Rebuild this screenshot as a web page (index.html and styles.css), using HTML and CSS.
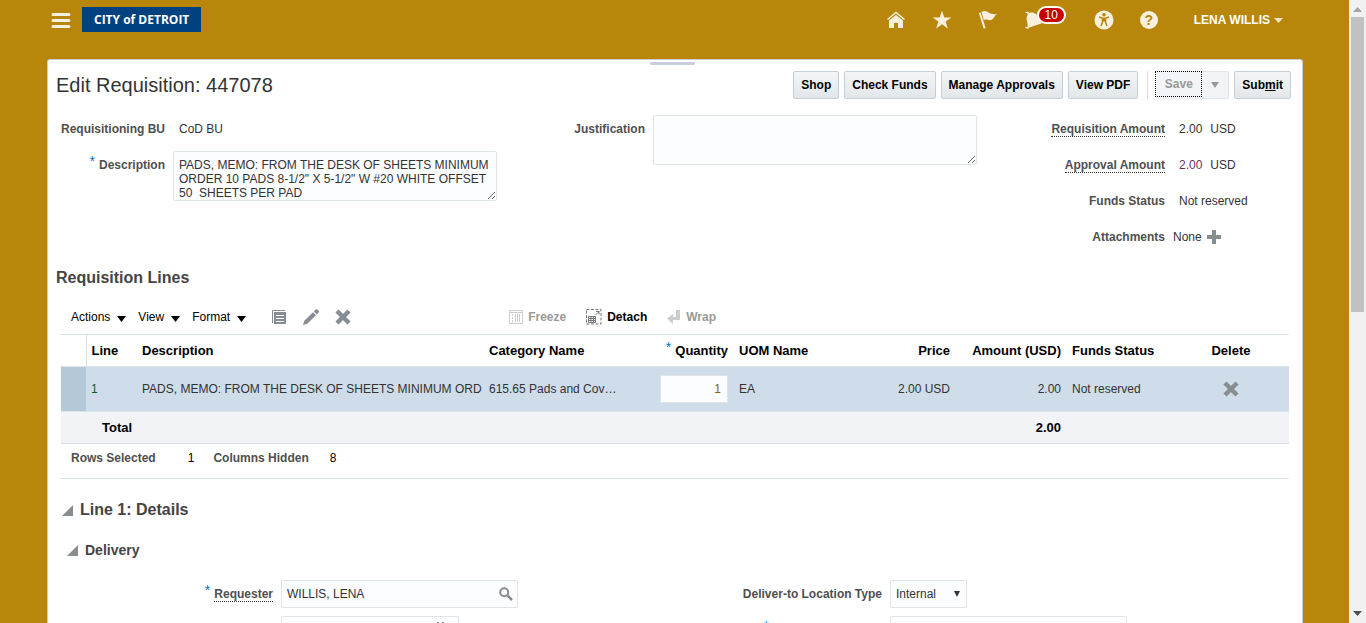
FILE: index.html
```html
<!DOCTYPE html>
<html lang="en">
<head>
<meta charset="utf-8">
<title>Edit Requisition: 447078</title>
<link rel="stylesheet" href="styles.css">
</head>
<body>
<div class="app">
  <header class="topbar">
    <button class="icon-btn menu" aria-label="Navigator"><svg width="20" height="16" viewBox="0 0 20 16" stroke="#f7f0df" stroke-width="3" stroke-linecap="round"><path d="M2 2.5h16M2 8.500h16M2 14.500h16"/></svg></button>
    <a class="brand" href="#">CITY of DETROIT</a>
    <nav class="tools">
      <button class="icon-btn" aria-label="Home"><svg width="20" height="20" viewBox="0 0 20 20"><path d="M1.500 9.500 10 2.500l8.500 7" fill="none" stroke="#f7f0df" stroke-width="1.600"/><path d="M3 10.600 10 4.900l7 5.700V18h-5v-5H8v5H3z" fill="#f7f0df"/></svg></button>
      <button class="icon-btn" aria-label="Favorites"><svg width="20" height="20" viewBox="0 0 20 20"><path d="m10 .8 2.300 6.600h7l-5.600 4.100 2.100 6.900L10 14.300l-5.800 4.100 2.100-6.900L.7 7.400h7z" fill="#f7f0df"/></svg></button>
      <button class="icon-btn" aria-label="Watchlist"><svg width="20" height="20" viewBox="0 0 20 20"><path d="m.8 3 1.800-.5 5 15.500-1.900.5z" fill="#f7f0df"/><path d="M3.500 2C7 .3 8.500 1.300 11 2.800c2.500 1.400 5 1.700 8.200 1.200-2.700 1.500-3.200 4.300-5.400 5.700-3 1.500-5.300-1.500-8 .3z" fill="#f7f0df"/></svg></button>
      <button class="icon-btn bell" aria-label="Notifications, 10 new"><svg width="20" height="20" viewBox="0 0 20 20"><path d="M1 3.200C2.300 1 4.300 1.600 5.300 3c4-1.500 8 1 9.200 5 .6 2.200 1 3.500 3.500 5.300L3 18.200c1.200-3 .6-4.500.1-6.500C2.200 8.800 2.500 6 4 4.300 3.200 3 2.200 2.800 1 3.200z" fill="#f7f0df"/><path d="M1.300 16.500c0 2 1.500 2.700 4 1.800z" fill="#f7f0df"/></svg><span class="badge">10</span></button>
      <button class="icon-btn" aria-label="Accessibility"><svg width="20" height="20" viewBox="0 0 20 20"><circle cx="10" cy="10" r="9.500" fill="#f7f0df"/><circle cx="10" cy="4.800" r="1.800" fill="#b8860b"/><path d="m5 7 3.500 1.200h3L15 7M10 8v3.500M8.500 8.500v3.500L7 16m4.500-7.500v3.500L13 16" fill="none" stroke="#b8860b" stroke-width="1.500"/></svg></button>
      <button class="icon-btn help" aria-label="Help">?</button>
      <button class="user">LENA WILLIS<svg width="9" height="5" viewBox="0 0 9 5"><path d="M0 0h9L4.500 5z" fill="#f0e4c6"/></svg></button>
    </nav>
  </header>

  <main class="panel">
    <span class="grip"></span>
    <div class="titlebar">
      <h1>Edit Requisition: 447078</h1>
      <div class="actions">
        <button class="btn">Shop</button>
        <button class="btn">Check Funds</button>
        <button class="btn">Manage Approvals</button>
        <button class="btn">View PDF</button>
        <span class="divider"></span>
        <div class="split"><button class="save">Save</button><button class="save-more" aria-label="More save options"><svg width="8" height="6" viewBox="0 0 8 6"><path d="M0 0h8L4 6z" fill="#999"/></svg></button></div>
        <button class="btn">Sub<u>m</u>it</button>
      </div>
    </div>

    <form class="summary">
      <div class="col">
        <div class="field"><span class="label">Requisitioning BU</span><span class="value">CoD BU</span></div>
        <div class="field area"><label class="label" for="desc"><i class="req">*</i>Description</label><textarea id="desc">PADS, MEMO: FROM THE DESK OF SHEETS MINIMUM
ORDER 10 PADS 8-1/2" X 5-1/2" W #20 WHITE OFFSET
50  SHEETS PER PAD</textarea></div>
      </div>
      <div class="col">
        <div class="field area"><label class="label" for="just">Justification</label><textarea id="just"></textarea></div>
      </div>
      <div class="col amounts">
        <div class="field"><span class="label"><span class="hint">Requisition Amount</span></span><span class="value money"><span>2.00</span><span>USD</span></span></div>
        <div class="field"><span class="label"><span class="hint">Approval Amount</span></span><span class="value money"><a class="visited" href="#">2.00</a><span>USD</span></span></div>
        <div class="field"><span class="label">Funds Status</span><span class="value">Not reserved</span></div>
        <div class="field"><span class="label">Attachments</span><span class="attach">None<button class="icon-btn" type="button" aria-label="Add attachment"><svg width="14" height="14" viewBox="0 0 14 14"><path d="M7 0v14M0 7h14" stroke="#888d91" stroke-width="4"/></svg></button></span></div>
      </div>
    </form>

    <h2>Requisition Lines</h2>
    <section class="lines">
      <div class="toolbar">
        <button class="menu-btn">Actions<svg width="9" height="6" viewBox="0 0 9 6"><path d="M0 0h9L4.500 6z"/></svg></button>
        <button class="menu-btn">View<svg width="9" height="6" viewBox="0 0 9 6"><path d="M0 0h9L4.500 6z"/></svg></button>
        <button class="menu-btn">Format<svg width="9" height="6" viewBox="0 0 9 6"><path d="M0 0h9L4.500 6z"/></svg></button>
        <div class="edit-tools">
          <button class="icon-btn" aria-label="Duplicate"><svg width="16" height="16" viewBox="0 0 16 16"><path d="M1.500 14V1.500H14" fill="none" stroke="#888d91"/><path d="M3 3h12v12H3z" fill="#888d91"/><path d="M5 6.500h8M5 9.500h8M5 12.500h8" stroke="#fff"/></svg></button>
          <button class="icon-btn" aria-label="Edit"><svg width="16" height="16" viewBox="0 0 16 16" fill="#888d91"><path d="m0 16 1.300-4.200L10 3.200l3 3-8.700 8.600z"/><path d="m10.800 2.400 1.800-1.800c.6-.6 1.200-.6 1.800 0l1.200 1.200c.5.600.5 1.200 0 1.700l-1.800 1.900z"/></svg></button>
          <button class="icon-btn" aria-label="Delete"><svg width="16" height="16" viewBox="0 0 16 16"><path d="m2 2 12 12M14 2 2 14" stroke="#888d91" stroke-width="4.500"/></svg></button>
        </div>
        <div class="view-tools">
          <button class="tool off" disabled><svg width="14" height="14" viewBox="0 0 14 14" fill="none" stroke="#cacccd"><path d="M.5.500h13v13H.5zM0 2.500h14M8.500 4v8M10.500 4v8M6.500 4v8"/><path d="M3.500 4v8" stroke-dasharray="2 1"/></svg>Freeze</button>
          <button class="tool"><svg width="16" height="16" viewBox="0 0 16 16" fill="none" stroke="#73797e"><path d="M.5.500h14.500v14.500H.5z" stroke-dasharray="3 1.500"/><path d="M2.500 7.500h7v6h-7zM2.500 9.500h7M2.500 11.500h7M5 7.500v6M7.500 7.500v6M9.500 6 13 2.500M10 2.500h3V5.500"/></svg>Detach</button>
          <button class="tool off" disabled><svg width="14" height="14" viewBox="0 0 14 14"><path d="M9 0h4v10H6v4L0 8.500 6 4v3h3z" fill="#cacccd"/></svg>Wrap</button>
        </div>
      </div>

      <table>
        <colgroup><col class="c-sel"><col class="c-line"><col><col class="c-cat"><col class="c-std"><col class="c-std"><col class="c-std"><col class="c-std"><col class="c-std"><col class="c-std"></colgroup>
        <thead><tr><th class="sel"></th><th>Line</th><th>Description</th><th>Category Name</th><th class="num"><i class="req">*</i>Quantity</th><th>UOM Name</th><th class="num">Price</th><th class="num">Amount (USD)</th><th>Funds Status</th><th class="mid">Delete</th></tr></thead>
        <tbody><tr><td class="sel"></td><td class="lineno">1</td><td>PADS, MEMO: FROM THE DESK OF SHEETS MINIMUM ORD</td><td>615.65 Pads and Cov…</td><td class="num"><input class="qty-input" value="1" aria-label="Quantity"></td><td>EA</td><td class="num">2.00 USD</td><td class="num">2.00</td><td>Not reserved</td><td class="mid"><button class="icon-btn" aria-label="Delete line 1"><svg width="16" height="16" viewBox="0 0 16 16"><path d="m2 2 12 12M14 2 2 14" stroke="#888d91" stroke-width="4.500"/></svg></button></td></tr></tbody>
        <tfoot><tr><td class="total" colspan="7">Total</td><td class="num">2.00</td><td colspan="2"></td></tr></tfoot>
      </table>
      <div class="status"><span class="label">Rows Selected</span><span class="count first">1</span><span class="label">Columns Hidden</span><span class="count">8</span></div>
    </section>

    <section class="details">
      <h2 class="disclose"><svg width="11" height="11" viewBox="0 0 11 11"><path d="M11 0v11H0z" fill="#888d91"/></svg>Line 1: Details</h2>
      <h3 class="disclose"><svg width="11" height="11" viewBox="0 0 11 11"><path d="M11 0v11H0z" fill="#888d91"/></svg>Delivery</h3>
      <form class="delivery">
        <div class="field"><label class="label" for="requester"><i class="req">*</i><span class="hint">Requester</span></label><span class="lookup wide"><input id="requester" value="WILLIS, LENA"><button class="icon-btn" type="button" aria-label="Search requester"><svg width="14" height="14" viewBox="0 0 14 14" fill="none" stroke="#888d91"><circle cx="5.200" cy="5.200" r="4" stroke-width="2"/><path d="m8.500 8.500 4.500 4.500" stroke-width="2.500"/></svg></button></span></div>
        <div class="field"><label class="label" for="loctype">Deliver-to Location Type</label><span class="select"><select id="loctype"><option>Internal</option></select><svg width="6" height="6" viewBox="0 0 6 6"><path d="M0 0h6L3 6z" fill="#333"/></svg></span></div>
        <div class="field"><span class="label"></span><span class="lookup date"><input aria-label="Date"><button class="icon-btn" type="button" aria-label="Pick date"><svg width="14" height="16" viewBox="0 0 14 16" stroke="#888d91" fill="none"><path d="M4 0v4M9 0v4" stroke-width="2"/><path d="M.5 4.500h13v11H.5z"/></svg></button></span></div>
        <div class="field"><span class="label open"><i class="req">*</i></span><span class="lookup wide"><input aria-label="Location"></span></div>
      </form>
    </section>
  </main>
</div>
<div class="scrollbar"><svg width="9" height="5" viewBox="0 0 9 5"><path d="M0 5h9L4.500 0z" fill="#a3a3a3"/></svg><div class="track"><div class="thumb"></div></div><svg width="9" height="5" viewBox="0 0 9 5"><path d="M0 0h9L4.500 5z" fill="#505050"/></svg></div>
</body>
</html>
```
FILE: styles.css
```css
* { box-sizing: border-box; }

body {
  margin: 0;
  height: 100vh;
  overflow: hidden;
  display: flex;
  background: #b8860b;
  color: #333;
  font: 12px/14px "Liberation Sans", Arial, sans-serif;
}

button, input, select, textarea { font: inherit; color: inherit; margin: 0; }
button { border: 0; padding: 0; background: none; cursor: pointer; white-space: nowrap; }
svg { display: block; flex: none; }

.app { flex: 1; min-width: 0; display: flex; flex-direction: column; }

/* Top bar */
.topbar { flex: none; height: 59px; padding: 7px 66px 0 51px; display: flex; align-items: flex-start; }
.icon-btn { display: flex; align-items: center; justify-content: center; }
.menu { height: 26px; margin-right: 11px; }
.brand {
  padding: 0 12px;
  background: #00417f;
  color: #fff;
  font: bold 12px/25px "Open Sans", sans-serif;
  text-decoration: none;
}
.tools { margin-left: auto; display: flex; align-items: center; gap: 26px; height: 26px; }
.bell { position: relative; width: 44px; justify-content: flex-start; }
.badge {
  position: absolute;
  left: 13px;
  top: -4px;
  width: 29px;
  border: 2px solid #fff;
  border-radius: 9px;
  background: #c80000;
  color: #fff;
  line-height: 14px;
}
.help {
  width: 18px;
  height: 18px;
  border-radius: 9px;
  background: #f7f0df;
  color: #b8860b;
  font-size: 14px;
  font-weight: bold;
}
.user { display: flex; align-items: center; gap: 4px; margin-left: 10px; color: #fff; font-weight: bold; }

/* Page panel */
.panel {
  position: relative;
  flex: 1;
  min-height: 0;
  overflow: hidden;
  margin: 0 46px 0 47px;
  padding: 0 8px;
  border: 1px solid #c9ccd0;
  border-bottom: 0;
  border-radius: 3px 3px 0 0;
  background: #fff;
}
.grip { position: absolute; top: 2px; left: 48%; width: 45px; height: 3px; border-radius: 2px; background: #c8cddb; }

.titlebar { display: flex; align-items: center; height: 51px; padding: 0 3px 2px 0; }
h1 { margin: 0; font-size: 20px; line-height: 24px; font-weight: normal; }
.actions { margin-left: auto; display: flex; align-items: center; gap: 5px; }
.btn {
  height: 28px;
  padding: 0 7px;
  border: 1px solid #c4ced7;
  border-radius: 2px;
  background: linear-gradient(#f3f5f6, #e2e7ea);
  color: #000;
  font-weight: bold;
}
.divider { width: 1px; height: 28px; margin: 0 2px 0 4px; background: #d8dee3; }
.split { display: flex; height: 28px; background: #f2f4f7; }
.save { width: 47px; height: 26px; border: 1px dotted #000; color: #999; font-weight: bold; }
.save-more {
  width: 27px;
  display: flex;
  align-items: center;
  justify-content: center;
  border: 1px solid #e1e6eb;
  border-left: 0;
  border-radius: 0 2px 2px 0;
}

/* Fields */
.label { flex: none; text-align: right; font-weight: bold; color: #4f4f4f; white-space: nowrap; }
.hint { display: inline-block; border-bottom: 1px dotted #333; }
.req { margin-right: 4px; color: #0572ce; font-style: normal; font-weight: normal; font-size: 14px; line-height: 0; vertical-align: 3px; }
.field { display: flex; align-items: center; gap: 8px; }

.summary { display: grid; grid-template-columns: 441fr 441fr 278fr; column-gap: 39px; height: 144px; }
.summary .field { height: 36px; }
.summary .label { width: 109px; }
.summary .area { height: auto; padding-top: 4px; align-items: flex-start; }
.summary .area .label { padding-top: 7px; }
.summary .value { padding-left: 6px; }
.summary .amounts .label { width: 149px; }
.money { display: flex; gap: 8px; }
.visited { color: #663366; text-decoration: none; }
.attach { display: flex; align-items: center; gap: 5px; }

textarea {
  flex: 1;
  min-width: 0;
  height: 50px;
  padding: 6px 2px 0 5px;
  border: 1px solid #dfe4e7;
  border-radius: 2px;
  background: #fcfdfe;
  overflow: hidden;
}

h2 { margin: 0; padding: 14px 0 12px; font-size: 16px; line-height: 18px; color: #444; }

/* Requisition lines */
.lines { margin: 0 5px; border-bottom: 1px solid #d5dfe6; }
.toolbar { display: flex; align-items: center; height: 35px; padding-left: 10px; }
.menu-btn { display: flex; align-items: flex-end; gap: 7px; margin-right: 12px; color: #000; }
.menu-btn svg { margin-bottom: 2px; }
.edit-tools { display: flex; gap: 16px; margin-left: 13px; }
.view-tools { display: flex; gap: 20px; margin-left: 158px; }
.tool { display: flex; align-items: center; gap: 5px; color: #000; font-weight: bold; }
.off { color: #9a9a9a; }

table { width: 100%; table-layout: fixed; border-collapse: collapse; }
.c-sel { width: 25px; }
.c-line { width: 51px; }
.c-cat { width: 139px; }
.c-std { width: 111px; }
th, td { padding: 0 5px; text-align: left; white-space: nowrap; overflow: hidden; }
thead th { height: 32px; border-top: 1px solid #d5dfe6; color: #000; font-size: 13px; }
thead .sel { border-right: 1px solid #d5dfe6; }
tbody tr { background: #cfdcea; }
tbody td { height: 45px; border-top: 1px solid #dbe4eb; border-bottom: 1px solid #dbe4eb; }
tbody td:nth-child(3) { padding-right: 0; }
tbody .sel { background: #b4c8d7; }
tbody .lineno { color: #0e5a34; }
tfoot tr { background: #f1f3f7; }
tfoot td { height: 32px; border-bottom: 1px solid #d5dfe6; color: #000; font-size: 13px; font-weight: bold; }
tfoot .total { padding-left: 41px; }
.num { padding-right: 6px; text-align: right; }
.mid { padding-right: 10px; text-align: center; }
.mid .icon-btn { margin: 0 auto; }
.qty-input {
  width: 68px;
  height: 28px;
  padding: 0 6px;
  border: 1px solid #dfe4e7;
  border-radius: 1px;
  background: #fcfdfe;
  color: #8a5a1c;
  text-align: right;
}
.status { display: flex; align-items: center; height: 34px; padding: 0 10px 6px; }
.count { margin-left: 21px; color: #000; }
.first { margin: 0 19px 0 32px; }

/* Line details */
.details { margin: 0 5px; }
.disclose { display: flex; align-items: center; gap: 7px; color: #444; }
.details h2 { padding: 22px 0 0 1px; }
h3 { margin: 0; padding: 22px 0 0 6px; font-size: 14px; line-height: 18px; }
.delivery { display: grid; grid-template-columns: 1fr 1fr; row-gap: 8px; padding: 21px 10px 0 0; }
.delivery .label { width: 212px; }
.delivery .open { padding-right: 109px; }
.lookup { display: flex; align-items: center; height: 28px; padding: 0 4px 0 5px; border: 1px solid #dfe4e7; border-radius: 1px; background: #fcfdfe; }
.lookup input { flex: 1; min-width: 0; padding: 0; border: 0; background: none; outline: 0; }
.wide { width: 237px; }
.date { width: 178px; padding-right: 10px; }
.select { display: grid; grid-template-columns: 1fr 12px; align-items: center; width: 77px; height: 28px; border: 1px solid #dfe4e7; border-radius: 1px; background: #fcfdfe; }
.select select { grid-area: 1 / 1 / 2 / 3; height: 26px; padding: 0 0 0 5px; border: 0; background: none; appearance: none; }
.select svg { grid-area: 1 / 2; pointer-events: none; }

/* Window scrollbar */
.scrollbar { flex: none; width: 17px; padding: 7px 0; display: flex; flex-direction: column; align-items: center; gap: 5px; background: #f1f1f1; }
.track { flex: 1; width: 13px; }
.thumb { height: 50%; background: #c1c1c1; }
```
